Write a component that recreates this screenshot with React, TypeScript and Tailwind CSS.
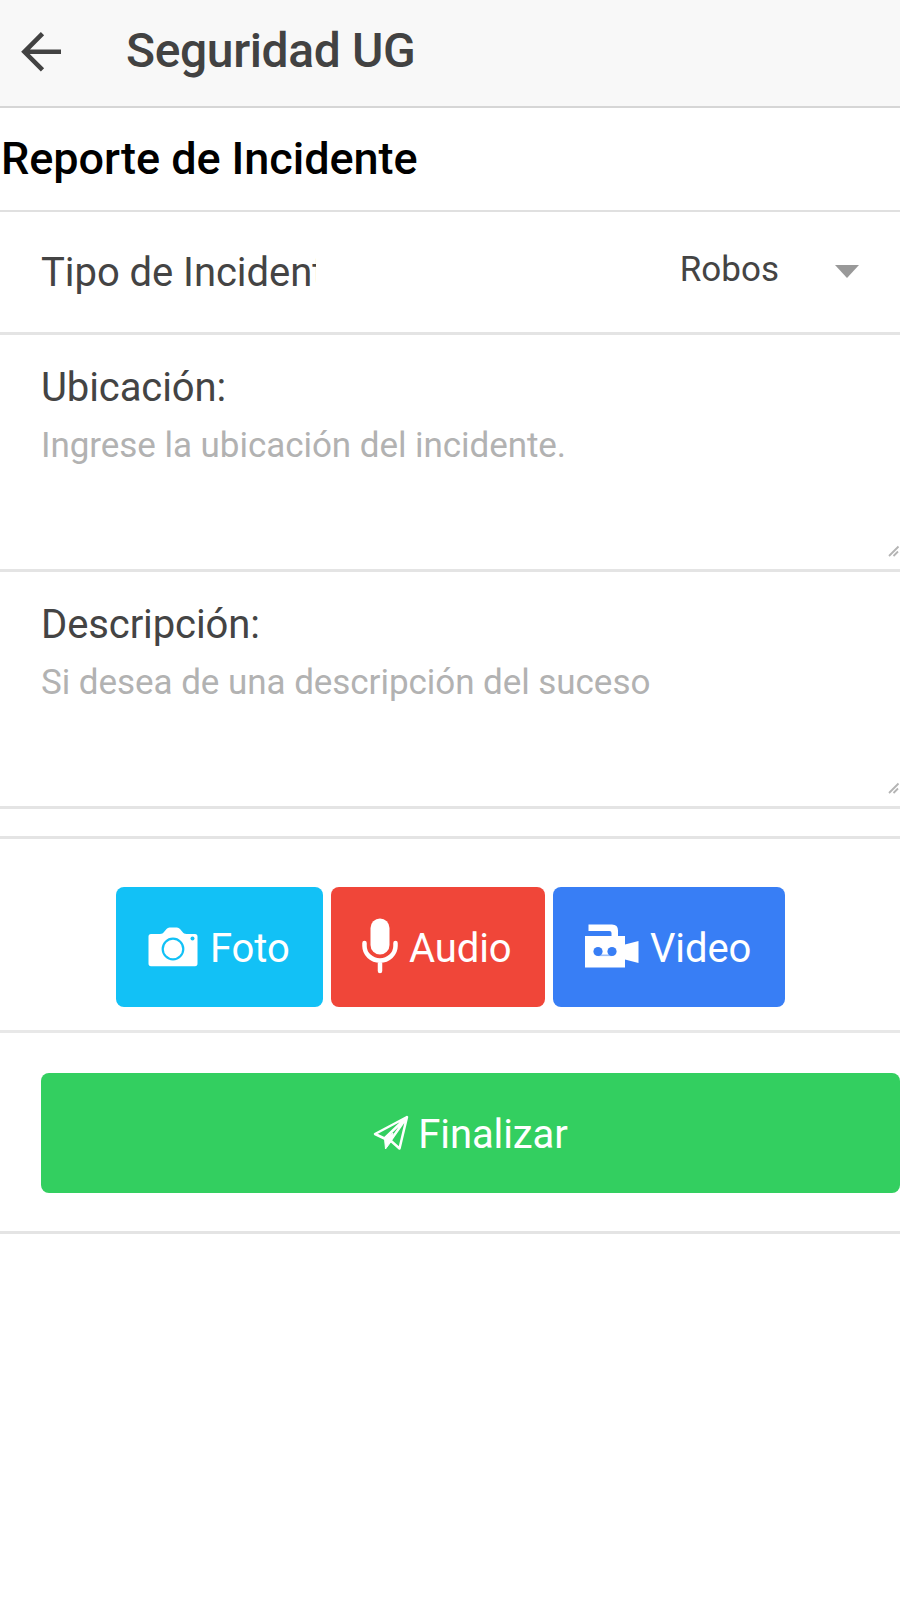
import type { ReactNode } from "react";

function BackIcon() {
  return (
    <svg
      className="mt-[-2px]"
      width="40"
      height="40"
      viewBox="0 0 40 40"
      fill="none"
      stroke="#424242"
      strokeWidth="4.6"
    >
      <path d="M40 19.800H3.500M21.500 1.700 3.400 19.800l18.100 18.100" />
    </svg>
  );
}

function CameraIcon() {
  return (
    <svg className="mt-[-1px]" width="50" height="40" viewBox="0 0 50 40">
      <path
        fill="#fff"
        d="M3 7h9c2 0 3-.8 4.200-2.200L18.500 2Q19.800.5 21.500.5h7.500q1.700 0 3 1.500l2.300 2.800C35.500 6.200 36.500 7 38.500 7H47q2.500 0 2.500 2.500V36.500q0 2.700-2.500 2.700H3Q.5 39.200.5 36.500V9.500Q.5 7 3 7z"
      />
      <circle cx="25" cy="22" r="10.300" fill="none" stroke="#12c1f6" strokeWidth="2.200" />
      <circle cx="44.500" cy="11.500" r="2" fill="#12c1f6" />
    </svg>
  );
}

function MicIcon() {
  return (
    <svg className="mt-[-2px]" width="36" height="56" viewBox="0 0 36 56">
      <rect x="8.500" y="0.500" width="19" height="36" rx="9.500" fill="#fff" />
      <path
        d="M2.500 25v3a15.500 14.500 0 0 0 31 0v-3M18 43v10"
        fill="none"
        stroke="#fff"
        strokeWidth="4.500"
        strokeLinecap="round"
      />
    </svg>
  );
}

function VideoIcon() {
  return (
    <svg className="mt-[-2px]" width="54" height="44" viewBox="0 0 54 44">
      <path
        fill="#fff"
        d="M0 12h26.500V9q0-2-2-2H3.500V.5H27q6 0 6 6V12h7v8.500l13.500-3.500v22L40 35.500v8H0z"
      />
      <g fill="#387ef5">
        <circle cx="13" cy="27.500" r="4.600" />
        <circle cx="27" cy="27.500" r="4.600" />
        <path d="M13 30.500h14v1.600H13z" opacity="0.500" />
      </g>
    </svg>
  );
}

function SendIcon() {
  return (
    <svg
      className="mt-[-1px]"
      width="36"
      height="36"
      viewBox="0 0 36 36"
      fill="none"
      stroke="#fff"
      strokeWidth="2.500"
      strokeLinejoin="round"
    >
      <path d="M34 2 2 19l9.500 4.500L34 2 26.500 33.500 17.500 25.500 34 2" />
      <path d="M11.500 23.500 12.500 34l6-8L20 18z" fill="#fff" strokeWidth="1" />
    </svg>
  );
}

function ResizeGrip() {
  return (
    <svg width="12" height="12" viewBox="0 0 12 12" stroke="#b4b4b4" strokeWidth="1.800">
      <path d="M1 11 10.500 1.500M5.500 11l4.500-4.500" />
    </svg>
  );
}

function TextField({ label, placeholder }: { label: string; placeholder: string }) {
  return (
    <div className="relative h-[237px] border-b-[3px] border-[#e4e4e4] pl-[41px] pt-[29px]">
      <div className="text-[40px] leading-[48px] tracking-[-0.1px] text-[#444]">{label}</div>
      <div className="mt-[13px] text-[35px] leading-[42px] tracking-[-0.05px] text-[#b2b2b2]">
        {placeholder}
      </div>
      <div className="absolute bottom-[12px] right-0">
        <ResizeGrip />
      </div>
    </div>
  );
}

function MediaButton({
  className,
  icon,
  children,
}: {
  className: string;
  icon: ReactNode;
  children: ReactNode;
}) {
  return (
    <button
      className={`flex h-[120px] items-center rounded-[8px] text-[40px] leading-[48px] tracking-[-0.1px] text-white ${className}`}
    >
      {icon}
      <span className="mt-[3px]">{children}</span>
    </button>
  );
}

export default function App() {
  return (
    <div className="h-[1598px] w-[900px] overflow-hidden bg-white font-['Roboto',sans-serif]">
      <header className="flex h-[108px] items-center border-b-2 border-[#d6d6d6] bg-[#f8f8f8] pl-[21px]">
        <BackIcon />
        <h1 className="ml-[65px] mt-[-4px] text-[48px] font-medium leading-[56px] tracking-[-0.38px] text-[#424242]">
          Seguridad UG
        </h1>
      </header>

      <h2 className="h-[104px] border-b-2 border-[#e0e0e0] pl-[1px] pt-[24px] text-[45px] font-medium leading-[54px] tracking-[-0.05px] text-black">
        Reporte de Incidente
      </h2>

      <div className="flex h-[123px] items-center border-b-[3px] border-[#e4e4e4] pl-[41px] pr-[41px]">
        <div className="mt-[2px] w-[275px] overflow-hidden whitespace-nowrap text-[40px] leading-[48px] tracking-[-0.05px] text-[#444]">
          Tipo de Incidente
        </div>
        <div className="ml-auto mt-[-5px] text-[35px] leading-[42px] text-[#444]">Robos</div>
        <svg className="mt-[-1px] ml-[56px]" width="24" height="13" viewBox="0 0 24 13">
          <path d="M0 0h24L12 13z" fill="#999" />
        </svg>
      </div>

      <TextField label="Ubicación:" placeholder="Ingrese la ubicación del incidente." />
      <TextField label="Descripción:" placeholder="Si desea de una descripción del suceso" />

      <div className="h-[30px] border-b-[3px] border-[#e4e4e4]" />

      <div className="flex h-[194px] gap-[8px] border-b-[3px] border-[#e8e8e8] pl-[116px] pt-[48px]">
        <MediaButton className="w-[207px] gap-[12px] bg-[#12c1f6] pl-[32px]" icon={<CameraIcon />}>
          Foto
        </MediaButton>
        <MediaButton className="w-[214px] gap-[11px] bg-[#f04639] pl-[31px]" icon={<MicIcon />}>
          Audio
        </MediaButton>
        <MediaButton className="w-[232px] gap-[11px] bg-[#387ef5] pl-[32px]" icon={<VideoIcon />}>
          Video
        </MediaButton>
      </div>

      <div className="h-[201px] border-b-[3px] border-[#e4e4e4] pl-[41px] pt-[40px]">
        <button className="flex h-[120px] w-full items-center justify-center gap-[9px] rounded-[8px] bg-[#33cf60] text-[40px] leading-[48px] tracking-[-0.1px] text-white">
          <SendIcon />
          <span className="mt-[3px]">Finalizar</span>
        </button>
      </div>
    </div>
  );
}
